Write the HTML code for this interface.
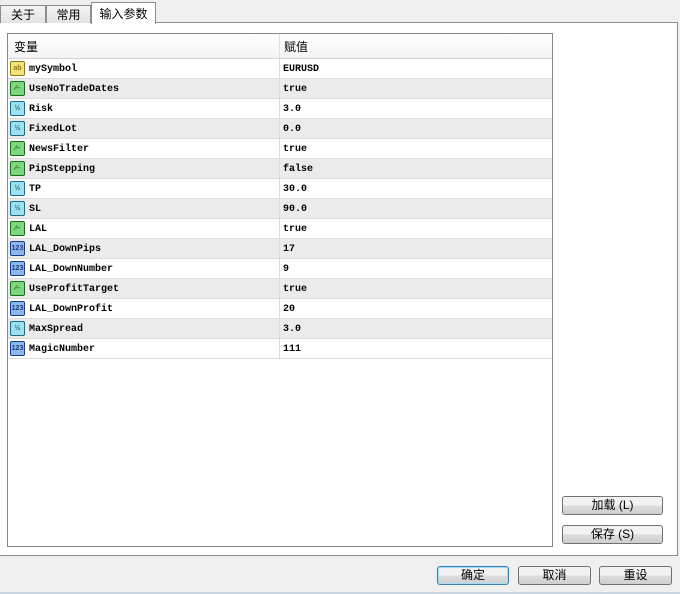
<!DOCTYPE html><html><head><style>
body{margin:0;width:680px;height:594px;background:#efefef;position:relative;overflow:hidden;font-family:"Liberation Sans","Noto Sans CJK SC",sans-serif;font-size:12px}
.a{position:absolute}
.tab{position:absolute;top:5px;height:17px;background:linear-gradient(#f6f6f6,#e2e2e2);border:1px solid #898c95;border-bottom:none;text-align:center;line-height:19px;font-size:12px}
.panel{position:absolute;left:0;top:22px;width:677px;height:532px;background:#fff;border:1px solid #898c95;border-left:none}
.list{position:absolute;left:7px;top:33px;width:544px;height:512px;border:1px solid #828790;background:#fff}
.row{position:absolute;left:0;width:544px;height:19px;border-bottom:1px solid #dcdcdc;font-family:"Liberation Mono",monospace;font-size:10px;font-weight:bold;line-height:22px}
.row.g{background:#ebebeb}
.row span{position:absolute}
.ic{position:absolute;left:2px;top:2px;border-radius:2px;font-size:7px;text-align:center;font-family:"Liberation Sans";font-weight:bold}
.col{position:absolute;left:271px;top:0;width:1px;height:19px;background:#dcdcdc}
.btn{position:absolute;height:17px;border:1px solid #707070;border-radius:3px;background:linear-gradient(#f2f2f2 50%,#dddddd 50%,#cfcfcf);text-align:center;line-height:17px;font-size:12px}
</style></head><body>
<div class="panel"></div>
<div class="tab" style="left:0;width:44px">关于</div>
<div class="tab" style="left:46px;width:43px">常用</div>
<div class="tab" style="left:91px;top:2px;height:21px;width:63px;background:#fff;line-height:22px;z-index:2">输入参数</div>
<div class="list">
<div class="a" style="left:0;top:0;width:544px;height:24px;background:linear-gradient(#fff,#f3f3f3);border-bottom:1px solid #d5d5d5"><span class="a" style="left:6px;top:4px">变量</span><span class="a" style="left:276px;top:4px">赋值</span><div class="a" style="left:271px;top:0;width:1px;height:24px;background:#e0e0e0"></div></div>
<div id="rows"></div>
</div>
<div class="btn" style="left:562px;top:496px;width:99px">加载 (L)</div>
<div class="btn" style="left:562px;top:525px;width:99px">保存 (S)</div>
<div class="btn" style="left:437px;top:566px;width:70px;border-color:#3c7fb1;box-shadow:inset 0 0 0 1px #9fdcf7">确定</div>
<div class="btn" style="left:518px;top:566px;width:71px">取消</div>
<div class="btn" style="left:599px;top:566px;width:71px">重设</div>
<div class="a" style="left:0;top:592px;width:680px;height:2px;background:#c8d6e2"></div>
<script>
var d=[["ab","mySymbol","EURUSD"],["b","UseNoTradeDates","true"],["v","Risk","3.0"],["v","FixedLot","0.0"],["b","NewsFilter","true"],["b","PipStepping","false"],["v","TP","30.0"],["v","SL","90.0"],["b","LAL","true"],["n","LAL_DownPips","17"],["n","LAL_DownNumber","9"],["b","UseProfitTarget","true"],["n","LAL_DownProfit","20"],["v","MaxSpread","3.0"],["n","MagicNumber","111"]];
var st={ab:["#f4e27a","#8a7a10","ab"],b:["#7ed67e","#1a6a1a","⁄‒"],v:["#9fe0f0","#1a6a8a","½"],n:["#8fb8e8","#1a3a8a","123"]};
var h="";d.forEach(function(r,i){var s=st[r[0]];h+='<div class="row'+(i%2?' g':'')+'" style="top:'+(25+i*20)+'px"><div class="ic" style="background:'+s[0]+';border:1px solid '+s[1]+';color:'+s[1]+';width:13px;height:13px;line-height:13px">'+s[2]+'</div><span style="left:21px">'+r[1]+'</span><div class="col"></div><span style="left:275px">'+r[2]+'</span></div>'});
document.getElementById("rows").innerHTML=h;
</script>
</body></html>
